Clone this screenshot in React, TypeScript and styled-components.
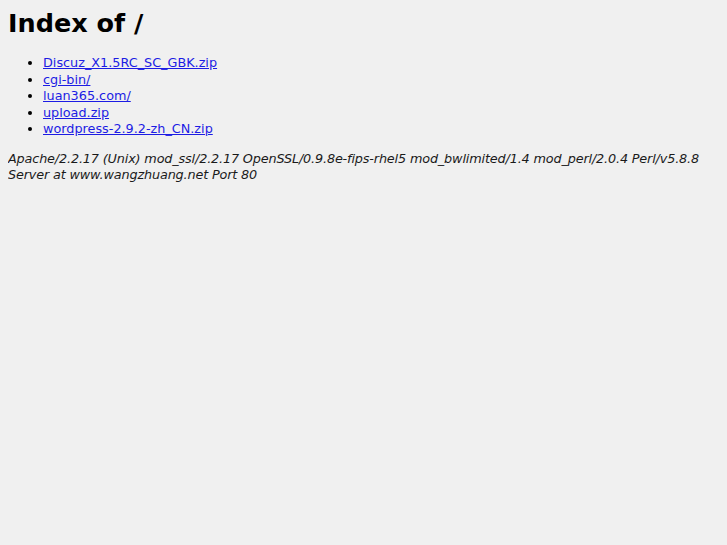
import React from 'react';
import styled, { createGlobalStyle } from 'styled-components';

const GlobalStyle = createGlobalStyle`
  html, body {
    background: #f0f0f0;
  }
  body {
    margin: 8px;
    font-family: "DejaVu Sans", sans-serif;
    font-size: 12.8px;
    line-height: 16.5px;
    color: #000;
  }
`;

const Title = styled.h1`
  font-size: 25.5px;
  line-height: 30px;
  font-weight: bold;
  margin: 0 0 17px;
`;

const FileList = styled.ul`
  margin: 0 0 13px;
  padding-left: 35px;
`;

const FileItem = styled.li`
  list-style: disc;
`;

const FileLink = styled.a`
  color: #1c1ce4;
  text-decoration: underline;
`;

const Address = styled.address`
  font-style: italic;
  color: #1a1a1a;
  letter-spacing: -0.15px;
  margin: 0;
`;

const files = [
  'Discuz_X1.5RC_SC_GBK.zip',
  'cgi-bin/',
  'luan365.com/',
  'upload.zip',
  'wordpress-2.9.2-zh_CN.zip',
];

const App: React.FC = () => (
  <>
    <GlobalStyle />
    <Title>Index of /</Title>
    <FileList>
      {files.map((f) => (
        <FileItem key={f}>
          <FileLink href={f}>{f}</FileLink>
        </FileItem>
      ))}
    </FileList>
    <Address>
      Apache/2.2.17 (Unix) mod_ssl/2.2.17 OpenSSL/0.9.8e-fips-rhel5 mod_bwlimited/1.4 mod_perl/2.0.4 Perl/v5.8.8 Server at www.wangzhuang.net Port 80
    </Address>
  </>
);

export default App;
